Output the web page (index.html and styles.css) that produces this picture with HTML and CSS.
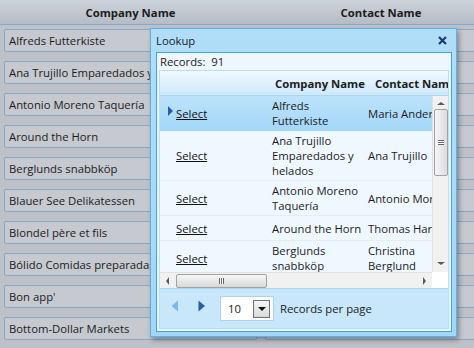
FILE: index.html
```html
<!DOCTYPE html>
<html lang="en">
<head>
    <meta charset="UTF-8">
    <title>Customers - Lookup</title>
    <link rel="stylesheet" href="styles.css">
</head>
<body>
    <div class="page">
        <div class="page-head">
            <div class="page-col">Company Name</div>
            <div class="page-col wide">Contact Name</div>
        </div>
        <div class="page-rows">
            <div class="page-row"><div class="page-cell"><div class="field">Alfreds Futterkiste</div></div><div class="page-cell"><div class="field">Maria Anders</div></div></div>
            <div class="page-row"><div class="page-cell"><div class="field">Ana Trujillo Emparedados y helados</div></div><div class="page-cell"><div class="field">Ana Trujillo</div></div></div>
            <div class="page-row"><div class="page-cell"><div class="field">Antonio Moreno Taquería</div></div><div class="page-cell"><div class="field">Antonio Moreno</div></div></div>
            <div class="page-row"><div class="page-cell"><div class="field">Around the Horn</div></div><div class="page-cell"><div class="field">Thomas Hardy</div></div></div>
            <div class="page-row"><div class="page-cell"><div class="field">Berglunds snabbköp</div></div><div class="page-cell"><div class="field">Christina Berglund</div></div></div>
            <div class="page-row"><div class="page-cell"><div class="field">Blauer See Delikatessen</div></div><div class="page-cell"><div class="field">Hanna Moos</div></div></div>
            <div class="page-row"><div class="page-cell"><div class="field">Blondel père et fils</div></div><div class="page-cell"><div class="field">Frédérique Citeaux</div></div></div>
            <div class="page-row"><div class="page-cell"><div class="field">Bólido Comidas preparadas</div></div><div class="page-cell"><div class="field">Martín Sommer</div></div></div>
            <div class="page-row"><div class="page-cell"><div class="field">Bon app'</div></div><div class="page-cell"><div class="field">Laurence Lebihan</div></div></div>
            <div class="page-row"><div class="page-cell"><div class="field">Bottom-Dollar Markets</div></div><div class="page-cell"><div class="field">Elizabeth Lincoln</div></div></div>
        </div>
    </div>

    <div class="lookup">
        <div class="lookup-title">
            <span>Lookup</span>
            <svg class="close" width="9" height="9" viewBox="0 0 9 9">
                <path d="M1 1 L8 8 M8 1 L1 8" stroke="#1f3c6e" stroke-width="2.2"/>
            </svg>
        </div>
        <div class="lookup-body">
            <div class="records">Records:&nbsp; 91</div>
            <div class="grid">
                <div class="grid-head">
                    <div class="c-sel"></div>
                    <div class="c-company">Company Name</div>
                    <div class="c-contact">Contact Name</div>
                </div>
                <div class="grid-main">
                    <div class="grid-rows">
                        <div class="grid-row selected">
                            <div class="c-sel"><span class="pointer"></span><a href="#">Select</a></div>
                            <div class="c-company">Alfreds Futterkiste</div>
                            <div class="c-contact">Maria Anders</div>
                        </div>
                        <div class="grid-row">
                            <div class="c-sel"><span class="pointer"></span><a href="#">Select</a></div>
                            <div class="c-company">Ana Trujillo Emparedados y helados</div>
                            <div class="c-contact">Ana Trujillo</div>
                        </div>
                        <div class="grid-row">
                            <div class="c-sel"><span class="pointer"></span><a href="#">Select</a></div>
                            <div class="c-company">Antonio Moreno Taquería</div>
                            <div class="c-contact">Antonio Moreno</div>
                        </div>
                        <div class="grid-row">
                            <div class="c-sel"><span class="pointer"></span><a href="#">Select</a></div>
                            <div class="c-company">Around the Horn</div>
                            <div class="c-contact">Thomas Hardy</div>
                        </div>
                        <div class="grid-row">
                            <div class="c-sel"><span class="pointer"></span><a href="#">Select</a></div>
                            <div class="c-company">Berglunds snabbköp</div>
                            <div class="c-contact">Christina Berglund</div>
                        </div>
                    </div>
                    <div class="vscroll">
                        <span class="arrow up"></span>
                        <div class="vthumb"><span class="grip-h"></span></div>
                        <span class="arrow down"></span>
                    </div>
                </div>
                <div class="hscroll">
                    <div class="htrack">
                        <span class="arrow left"></span>
                        <div class="hthumb"><span class="grip-v"></span></div>
                        <span class="arrow right"></span>
                    </div>
                    <div class="corner"></div>
                </div>
            </div>
            <div class="pager">
                <svg class="page-btn" width="8" height="12" viewBox="0 0 8 12">
                    <path d="M7 0.5 L0.5 6 L7 11.5 Z" fill="#7db8ea"/>
                </svg>
                <svg class="page-btn next" width="8" height="12" viewBox="0 0 8 12">
                    <path d="M0.5 0.5 L7 6 L0.5 11.5 Z" fill="#2a5ca6"/>
                </svg>
                <div class="combo">
                    <span>10</span>
                    <span class="combo-btn"><span class="caret"></span></span>
                </div>
                <span class="per-page">Records per page</span>
            </div>
        </div>
    </div>
</body>
</html>
```

FILE: styles.css
```css
body {
    margin: 0;
    width: 474px;
    height: 348px;
    overflow: hidden;
    position: relative;
    background: #bec1c7;
    font-family: 'Open Sans', sans-serif;
    font-size: 11.3px;
    color: #1c1c1c;
}

/* background grid */

.page-head {
    display: flex;
    height: 24px;
    border-bottom: 1px solid #86a9cb;
    background: linear-gradient(#cdd3da, #b5bcc5);
    font-weight: bold;
}

.page-col {
    width: 261px;
    flex-shrink: 0;
    display: flex;
    align-items: center;
    justify-content: center;
}

.page-col.wide {
    width: 240px;
}

.page-row {
    display: flex;
    height: 32px;
}

.page-cell {
    width: 261px;
    flex-shrink: 0;
    padding: 4px 0 0 4px;
    box-sizing: border-box;
}

.field {
    width: 253px;
    height: 23px;
    box-sizing: border-box;
    border: 1px solid #86a9c9;
    border-radius: 2px;
    background: #c6c9cf;
    padding-left: 4px;
    line-height: 21px;
    white-space: nowrap;
    overflow: hidden;
}

/* lookup dialog */

.lookup {
    position: absolute;
    left: 150px;
    top: 28px;
    width: 307px;
    box-sizing: border-box;
    border: 1px solid #5eb0ea;
    padding: 0 4px 4px 5px;
    background: linear-gradient(#b0def9, #a4d6f7);
    box-shadow: 2px 3px 5px rgba(0, 0, 0, 0.35);
}

.lookup-title {
    height: 23px;
    display: flex;
    align-items: center;
    justify-content: space-between;
    padding-right: 5px;
    color: #1a1a1a;
}

.close {
    display: block;
}

.lookup-body {
    border: 1px solid #41a3e6;
    background: #eef7fe;
    padding: 0 2px 2px 2px;
}

.records {
    height: 17px;
    line-height: 18px;
    padding-left: 1px;
}

.grid {
    border: 1px solid #bcdcf4;
    border-bottom: none;
    background: #f0f8ff;
}

.grid-head {
    display: flex;
    height: 24px;
    overflow: hidden;
    border-bottom: 1px solid #a9d6f5;
    background: linear-gradient(#f1f9ff, #cde8fb);
    font-weight: bold;
    white-space: nowrap;
}

.grid-head > div {
    display: flex;
    align-items: center;
}

.grid-head .c-company {
    padding-left: 7px;
}

.grid-head .c-contact {
    padding-left: 10px;
}

.c-sel {
    width: 108px;
    flex-shrink: 0;
    box-sizing: border-box;
}

.c-company {
    width: 97px;
    flex-shrink: 0;
    box-sizing: border-box;
    padding-left: 4px;
}

.c-contact {
    width: 92px;
    flex-shrink: 0;
    box-sizing: border-box;
    padding-left: 3px;
}

.grid-main {
    display: flex;
    height: 176px;
}

.grid-rows {
    flex: 1;
    overflow: hidden;
}

.grid-row {
    display: flex;
    align-items: center;
    min-height: 25px;
    padding: 2px 0;
    line-height: 15px;
    border-bottom: 1px solid #e1eef9;
    box-sizing: border-box;
}

.grid-row.selected {
    background: linear-gradient(#bde3fc, #a3d7f8);
    border-bottom-color: #a3d7f8;
}

.grid-row .c-sel {
    display: flex;
    align-items: center;
    padding-left: 8px;
}

.grid-row a {
    color: #111;
    text-decoration: underline;
}

.pointer {
    width: 0;
    height: 0;
    margin-right: 3px;
    border-top: 5px solid transparent;
    border-bottom: 5px solid transparent;
    border-left: 5px solid #2a5ca6;
    visibility: hidden;
    position: relative;
    top: -2px;
}

.selected .pointer {
    visibility: visible;
}

/* scrollbars */

.vscroll {
    width: 16px;
    flex-shrink: 0;
    background: #f1f1f1;
    border-left: 1px solid #e2e2e2;
    box-sizing: border-box;
    display: flex;
    flex-direction: column;
    align-items: center;
}

.vthumb {
    width: 14px;
    height: 67px;
    margin: 4px 0 auto;
    box-sizing: border-box;
    border: 1px solid #9ea3a8;
    border-radius: 2px;
    background: linear-gradient(90deg, #f6f6f6, #dcdcdc);
    display: flex;
    align-items: center;
    justify-content: center;
}

.grip-h {
    width: 6px;
    height: 5px;
    border-top: 1px solid #666;
    border-bottom: 1px solid #666;
    box-sizing: border-box;
    background: linear-gradient(#fff 1px, #666 1px, #666 2px, #fff 2px);
}

.hscroll {
    display: flex;
    height: 16px;
}

.htrack {
    flex: 1;
    display: flex;
    align-items: center;
    background: #f1f1f1;
    border-top: 1px solid #e2e2e2;
    padding: 0 6px;
}

.hthumb {
    width: 91px;
    height: 14px;
    margin-left: 7px;
    margin-right: auto;
    box-sizing: border-box;
    border: 1px solid #9ea3a8;
    border-radius: 2px;
    background: linear-gradient(#f6f6f6, #d8d8d8);
    display: flex;
    align-items: center;
    justify-content: center;
}

.grip-v {
    width: 5px;
    height: 6px;
    border-left: 1px solid #666;
    border-right: 1px solid #666;
    box-sizing: border-box;
    background: linear-gradient(90deg, #fff 1px, #666 1px, #666 2px, #fff 2px);
}

.corner {
    width: 16px;
    background: #fff;
}

.arrow {
    width: 0;
    height: 0;
}

.arrow.up {
    margin-top: 6px;
    border-left: 4px solid transparent;
    border-right: 4px solid transparent;
    border-bottom: 3px solid #5a5a5a;
}

.arrow.down {
    margin-bottom: 7px;
    border-left: 4px solid transparent;
    border-right: 4px solid transparent;
    border-top: 3px solid #5a5a5a;
}

.arrow.left {
    border-top: 4px solid transparent;
    border-bottom: 4px solid transparent;
    border-right: 3px solid #5a5a5a;
}

.arrow.right {
    border-top: 4px solid transparent;
    border-bottom: 4px solid transparent;
    border-left: 3px solid #5a5a5a;
}

/* pager */

.pager {
    height: 39px;
    display: flex;
    align-items: center;
    padding-left: 11px;
    background: #c8e7fa;
    border: 1px solid #b6ddf7;
    border-top-color: #a9d6f5;
}

.page-btn {
    display: block;
    margin-top: -5px;
}

.page-btn.next {
    margin-left: 19px;
}

.combo {
    margin-left: 14px;
    width: 54px;
    height: 25px;
    box-sizing: border-box;
    border: 1px solid #a8d4f3;
    background: #fff;
    display: flex;
    align-items: center;
    justify-content: space-between;
    padding: 0 3px 0 7px;
}

.combo-btn {
    width: 17px;
    height: 18px;
    box-sizing: border-box;
    border: 1px solid #707070;
    background: linear-gradient(#f5f5f5, #dadada);
    display: flex;
    align-items: center;
    justify-content: center;
}

.caret {
    width: 0;
    height: 0;
    border-left: 4px solid transparent;
    border-right: 4px solid transparent;
    border-top: 4px solid #111;
}

.per-page {
    margin-left: 6px;
}
```
